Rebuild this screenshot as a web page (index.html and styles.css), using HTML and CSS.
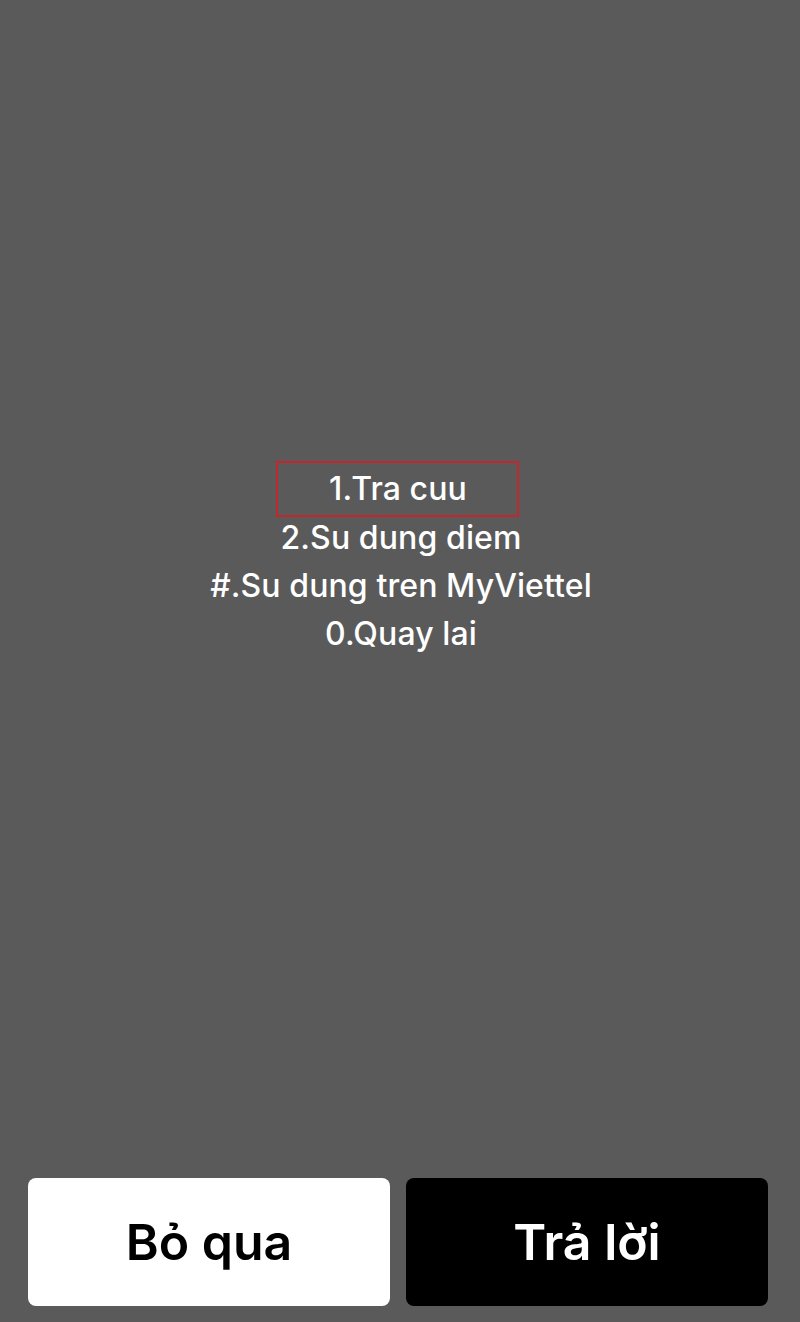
FILE: index.html
```html
<!DOCTYPE html>
<html lang="vi">
<head>
<meta charset="utf-8">
<link rel="stylesheet" href="styles.css">
</head>
<body>
<div class="screen">
  <main class="content">
    <div class="menu">
      <div class="item selected">1.Tra cuu</div>
      <div class="item">2.Su dung diem</div>
      <div class="item">#.Su dung tren MyViettel</div>
      <div class="item">0.Quay lai</div>
    </div>
  </main>
  <div class="actions">
    <button class="btn btn-light">Bỏ qua</button>
    <button class="btn btn-dark">Trả lời</button>
  </div>
</div>
</body>
</html>
```
FILE: styles.css
```css
html, body {
  margin: 0;
  padding: 0;
  background: #5a5a5a;
}
.screen {
  width: 800px;
  height: 1322px;
  display: flex;
  flex-direction: column;
  font-family: Inter, "Noto Sans", sans-serif;
}
.content {
  flex: 1;
  padding-top: 466px;
  box-sizing: border-box;
}
.menu {
  display: flex;
  flex-direction: column;
  align-items: center;
  color: #ffffff;
  font-size: 32px;
  font-weight: 500;
  letter-spacing: 0.1px;
  line-height: 48px;
}
.item {
  padding-left: 2px;
}
.selected {
  margin: -5px 0 -3px;
  width: 237px;
  height: 52px;
  border: 2px solid #c5262c;
  box-sizing: content-box;
  text-align: center;
  line-height: 52px;
  margin-left: -6px;
}
.actions {
  display: flex;
  gap: 16px;
  padding: 0 32px 16px 28px;
}
.btn {
  flex: 1;
  height: 128px;
  border: none;
  border-radius: 8px;
  font-family: Inter, "Noto Sans", sans-serif;
  font-size: 50px;
  font-weight: 600;
  padding: 0;
}
.btn-light {
  background: #ffffff;
  color: #000000;
}
.btn-dark {
  background: #000000;
  color: #ffffff;
}
```
